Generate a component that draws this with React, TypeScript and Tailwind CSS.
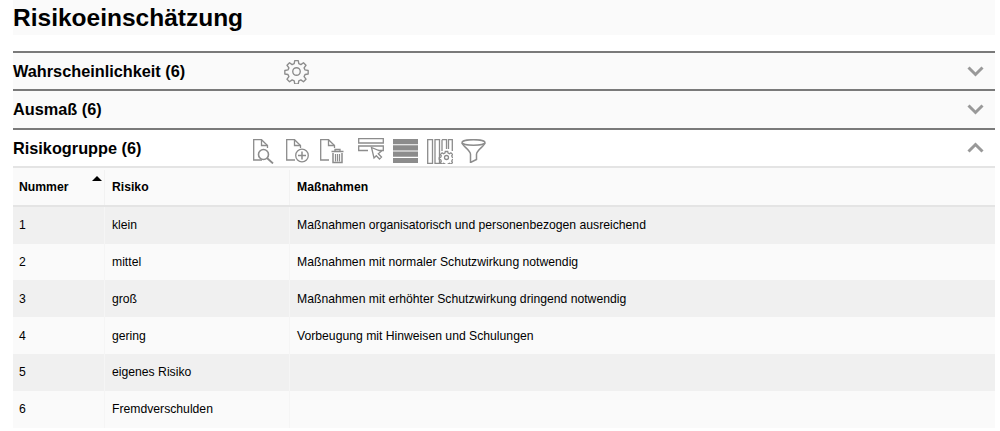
const rows = [
  { nr: '1', risk: 'klein', action: 'Maßnahmen organisatorisch und personenbezogen ausreichend' },
  { nr: '2', risk: 'mittel', action: 'Maßnahmen mit normaler Schutzwirkung notwendig' },
  { nr: '3', risk: 'groß', action: 'Maßnahmen mit erhöhter Schutzwirkung dringend notwendig' },
  { nr: '4', risk: 'gering', action: 'Vorbeugung mit Hinweisen und Schulungen' },
  { nr: '5', risk: 'eigenes Risiko', action: '' },
  { nr: '6', risk: 'Fremdverschulden', action: '' },
];

function Chevron({ up }: { up?: boolean }) {
  return (
    <svg width="17" height="11" viewBox="0 0 17 11" fill="none" stroke="#999" strokeWidth="3">
      <path d={up ? 'M1.5 9.5 L8.5 2.5 L15.5 9.5' : 'M1.5 1.5 L8.5 8.5 L15.5 1.5'} />
    </svg>
  );
}

function Gear({ size, color = '#8c8c8c' }: { size: number; color?: string }) {
  return (
    <svg width={size} height={size} viewBox="0 0 24 24" fill="none" stroke={color} strokeWidth="1.300" strokeLinejoin="round">
      <path d="M10.300 1.500h3.400l.5 3 2 .9 2.500-1.800 2.400 2.400-1.800 2.500.9 2 3 .5v3.400l-3 .5-.9 2 1.800 2.500-2.400 2.400-2.500-1.800-2 .9-.5 3h-3.400l-.5-3-2-.9-2.500 1.800-2.400-2.400 1.800-2.500-.9-2-3-.5v-3.400l3-.5.9-2-1.800-2.500 2.400-2.400 2.500 1.800 2-.9z" />
      <circle cx="12" cy="12" r="3.600" />
    </svg>
  );
}

function Doc({ children }: { children?: React.ReactNode }) {
  return (
    <svg width="24" height="25" viewBox="0 0 24 25" fill="none" stroke="#8c8c8c" strokeWidth="1.300">
      <path d="M9 21H.7V.7H8.500L14.500 6.500V9" />
      <path d="M8.500 .7V6.500H14.500" />
      {children}
    </svg>
  );
}

function Toolbar() {
  return (
    <div className="flex items-start ml-[112px] h-full pt-[9px]">
      <Doc>
        <circle cx="10.500" cy="15.500" r="5" strokeWidth="1.600" />
        <path d="M14 19L20 24.500" strokeWidth="1.800" />
      </Doc>
      <div className="ml-[9px]">
        <Doc>
          <circle cx="16" cy="16.500" r="6.300" />
          <path d="M16 12.500V20.500M12 16.500H20" strokeWidth="1.500" />
        </Doc>
      </div>
      <div className="ml-[10px]">
        <Doc>
          <path d="M11.500 12.500H23.500M15 12.500V10.500H20V12.500" />
          <path d="M13 14V23.500H22V14" strokeWidth="1.500" />
          <path d="M15.500 15V22.500M17.500 15V22.500M19.500 15V22.500" strokeWidth="1.200" />
        </Doc>
      </div>
      <svg width="26" height="22" viewBox="0 0 26 22" fill="none" stroke="#8c8c8c" strokeWidth="1.300" className="ml-[14px] -mt-[1px]">
        <path d="M.7 .7H25.300V5H.7z" />
        <path d="M10 12.500H.7V8H25.300V12.500H20" />
        <path d="M13.500 9.500L16 20L18.300 17.700L21.500 21L23.500 19L20.300 15.700L23 13.500z" fill="#fff" />
      </svg>
      <svg width="25" height="24" viewBox="0 0 25 24" fill="#8c8c8c" className="ml-[9px]">
        <path d="M0 0H25V5.200H0zM0 6.300H25V11.500H0zM0 12.600H25V17.800H0zM0 18.900H25V24H0z" />
      </svg>
      <svg width="26" height="25" viewBox="0 0 26 25" fill="none" stroke="#8c8c8c" strokeWidth="1.300" className="ml-[9px]">
        <path d="M.7 .7H5.500V24.300H.7zM8 .7H12.500V24.300H8zM15 .7H19.500V10M21.500 10V.7H25.300V12M15 .7V12M12.500 24.300H14" />
        <circle cx="19.500" cy="18.500" r="2" />
        <path d="M18.300 12.500h2.400l.4 1.600 1.400.6 1.400-.9 1.700 1.700-.9 1.400.6 1.400 1.500.4v1.600l-1.500.4-.6 1.400.9 1.400-1.700 1.700-1.400-.9-1.400.6-.4 1h-2.400l-.4-1-1.400-.6-1.400.9-1.700-1.700.9-1.400-.6-1.400-1.500-.4v-1.600l1.500-.4.6-1.400-.9-1.400 1.700-1.700 1.400.9 1.400-.6z" />
      </svg>
      <svg width="25" height="24" viewBox="0 0 25 24" fill="none" stroke="#8c8c8c" strokeWidth="1.500" className="ml-[8px]">
        <ellipse cx="12.500" cy="3.500" rx="11.500" ry="2.800" />
        <path d="M1 4C1.500 7 9 11 9.500 15V23.500L15.500 20.500V15C16 11 23.500 7 24 4" />
      </svg>
    </div>
  );
}

function SectionHead({ title, open, children }: { title: string; open?: boolean; children?: React.ReactNode }) {
  return (
    <div className={`border-t-2 border-[#7a7a7a] h-[38.3px] flex items-center ${open ? 'bg-white' : 'bg-[#fafafa]'}`}>
      <h2 className="text-[16.3px] font-bold text-black whitespace-nowrap">{title}</h2>
      <div className="flex-1 h-full flex items-center">{children}</div>
      <div className="mr-[11px] flex items-center">
        <Chevron up={open} />
      </div>
    </div>
  );
}

export default function App() {
  return (
    <div className="w-[1000px] h-[431px] overflow-hidden bg-white pl-[13px] pr-[5px] font-['Liberation_Sans',Arial,sans-serif]">
      <div className="h-[35px] pt-[1px] bg-[#fafafa] flex items-center">
        <h1 className="text-[24.5px] font-bold text-black leading-none">Risikoeinschätzung</h1>
      </div>
      <div className="mt-[16px]">
        <SectionHead title="Wahrscheinlichkeit (6)">
          <div className="ml-[99px] mt-[1px]">
            <Gear size={25} />
          </div>
        </SectionHead>
        <SectionHead title="Ausmaß (6)" />
        <SectionHead title="Risikogruppe (6)" open>
          <Toolbar />
        </SectionHead>
      </div>
      <div className="border-t-2 border-[#e4e4e4]">
        <div className="flex h-[39px] pt-[2px] border-b-2 border-[#e4e4e4] bg-[#fafafa] text-[12.2px] font-bold text-black">
          <div className="w-[92px] pl-[6px] relative flex items-center border-r border-[#f2f2f2]">
            Nummer
            <span className="absolute right-[2px] top-[6px] w-0 h-0 border-x-[5px] border-x-transparent border-b-[5px] border-b-black" />
          </div>
          <div className="w-[185px] px-[7px] flex items-center border-r border-[#f2f2f2]">Risiko</div>
          <div className="flex-1 px-[7px] flex items-center">Maßnahmen</div>
        </div>
        {rows.map((row, i) => (
          <div key={row.nr} className={`flex h-[36.8px] text-[12.2px] text-black ${i % 2 === 0 ? 'bg-[#f0f0f0]' : 'bg-[#fafafa]'}`}>
            <div className="w-[92px] pl-[6px] flex items-center border-r border-[#f5f5f5]">{row.nr}</div>
            <div className="w-[185px] px-[7px] flex items-center border-r border-[#f5f5f5]">{row.risk}</div>
            <div className="flex-1 px-[7px] flex items-center">{row.action}</div>
          </div>
        ))}
      </div>
    </div>
  );
}
